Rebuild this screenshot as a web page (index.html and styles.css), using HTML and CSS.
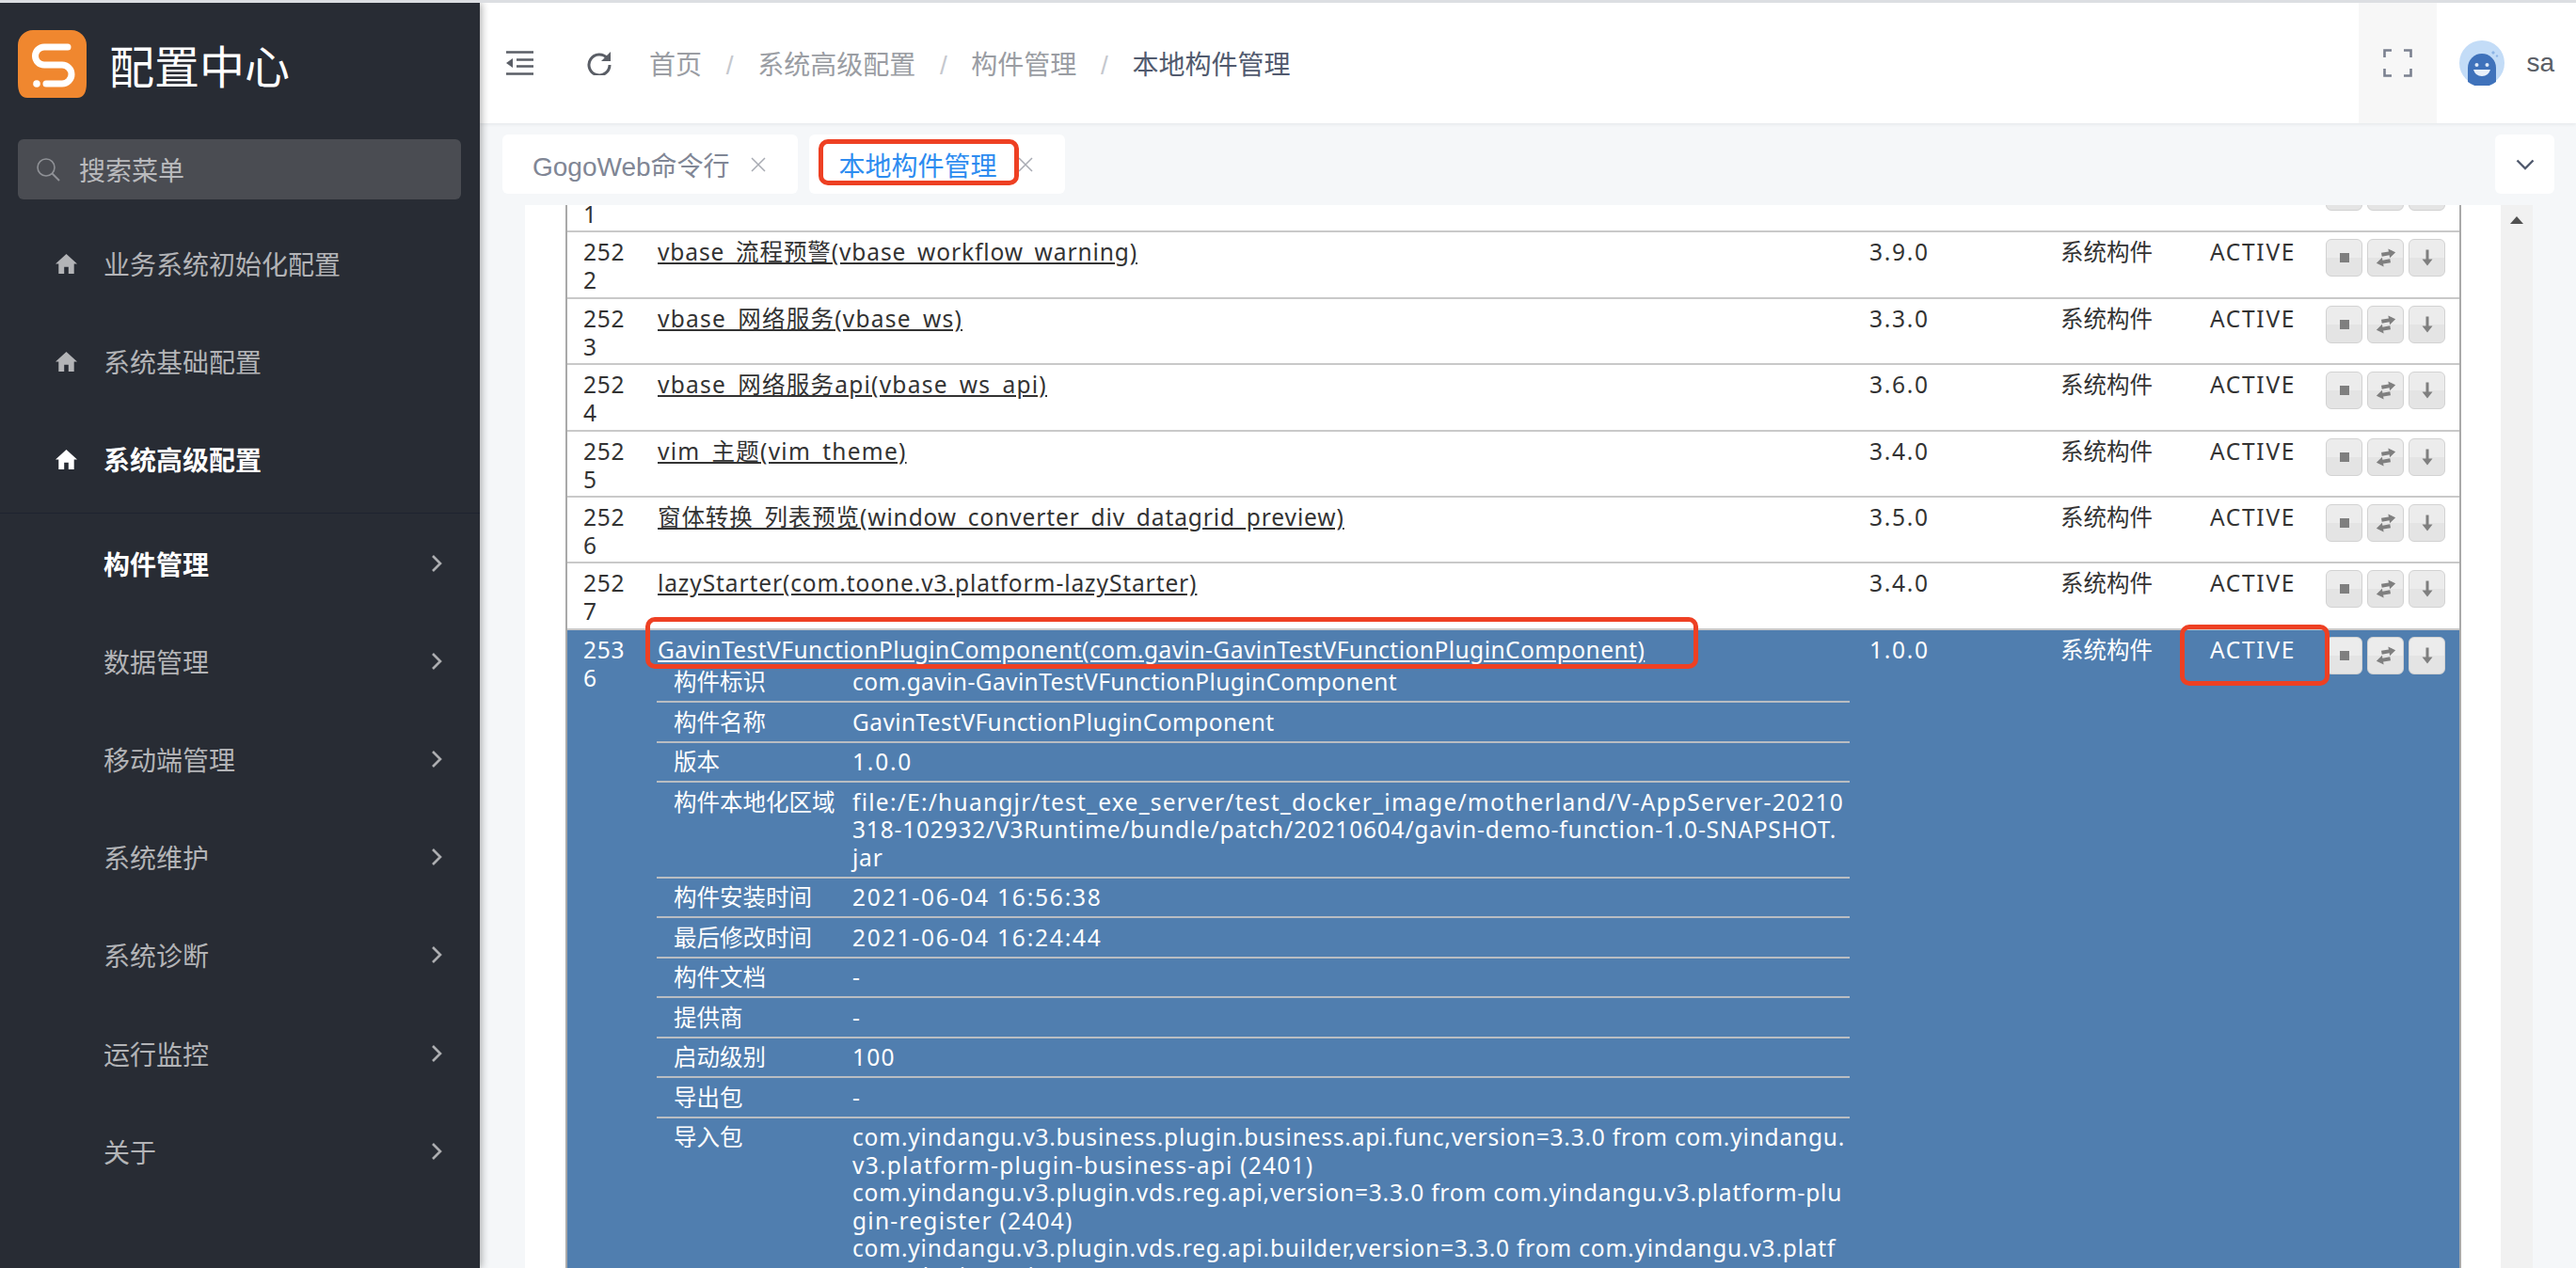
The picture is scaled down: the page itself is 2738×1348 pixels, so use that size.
FILE: index.html
```html
<!DOCTYPE html>
<html lang="zh-CN">
<head>
    <meta charset="UTF-8">
    <title>配置中心</title>
    <link rel="stylesheet" href="styles.css">
</head>
<body>

<svg class="defs" width="0" height="0">
    <symbol id="i-home" viewBox="0 0 24 24"><path d="M12 2 0.5 12.6h3.3V23h5.900v-7.200h4.600V23h5.900V12.600h3.300z"/></symbol>
    <symbol id="i-right" viewBox="0 0 12 20"><path d="M2 2l8 8-8 8" fill="none" stroke="currentColor" stroke-width="2.600"/></symbol>
    <symbol id="i-close" viewBox="0 0 20 20"><path d="M3 3l14 14M17 3 3 17" fill="none" stroke="currentColor" stroke-width="1.500"/></symbol>
    <symbol id="i-stop" viewBox="0 0 20 20"><rect x="5" y="5" width="10" height="10"/></symbol>
    <symbol id="i-swap" viewBox="0 0 24 20"><g transform="rotate(-10 12 10)"><path d="M23 6 16 1v3H8v4h8v3zM1 14l7-5v3h8v4H8v3z"/></g></symbol>
    <symbol id="i-down" viewBox="0 0 20 20"><path d="M8.500 1.500h3v10h4L10 18.500 4.500 11.500h4z"/></symbol>
</svg>

<div class="layout">
    <!-- Left menu -->
    <aside class="sidebar">
        <div class="brand">
            <svg class="logo" viewBox="0 0 73 72">
                <path d="M16 0h41a16 16 0 0 1 16 16v40q0 16-10 16H10Q0 72 0 56V16A16 16 0 0 1 16 0z" fill="#f0872f"/>
                <path d="M53 18H28a9.500 9.500 0 0 0 0 19h19a10 10 0 0 1 0 20H30" fill="none" stroke="#fff" stroke-width="7" stroke-linecap="round"/>
                <circle cx="20" cy="57" r="3.800" fill="#fff"/>
            </svg>
            <span class="brand-name">配置中心</span>
        </div>
        <div class="search">
            <svg class="search-icon" viewBox="0 0 26 26"><circle cx="11" cy="11" r="9" fill="none" stroke="currentColor" stroke-width="1.600"/><path d="M17.500 17.500 25 25" stroke="currentColor" stroke-width="2"/></svg>
            <span>搜索菜单</span>
        </div>
        <nav class="menu-top">
            <a class="menu-item"><svg class="home"><use href="#i-home"/></svg>业务系统初始化配置</a>
            <a class="menu-item"><svg class="home"><use href="#i-home"/></svg>系统基础配置</a>
            <a class="menu-item active"><svg class="home"><use href="#i-home"/></svg>系统高级配置</a>
        </nav>
        <nav class="menu-sub">
            <a class="menu-item sub active">构件管理<svg class="arrow"><use href="#i-right"/></svg></a>
            <a class="menu-item sub">数据管理<svg class="arrow"><use href="#i-right"/></svg></a>
            <a class="menu-item sub">移动端管理<svg class="arrow"><use href="#i-right"/></svg></a>
            <a class="menu-item sub">系统维护<svg class="arrow"><use href="#i-right"/></svg></a>
            <a class="menu-item sub">系统诊断<svg class="arrow"><use href="#i-right"/></svg></a>
            <a class="menu-item sub">运行监控<svg class="arrow"><use href="#i-right"/></svg></a>
            <a class="menu-item sub">关于<svg class="arrow"><use href="#i-right"/></svg></a>
        </nav>
    </aside>

    <div class="main">
        <header class="topbar">
            <svg class="tool-icon fold" viewBox="0 0 29 26"><path d="M0 1.500h29M11 9.500h18M11 16.500h18M0 24.500h29" fill="none" stroke="currentColor" stroke-width="2.400"/><path d="M7 8v10l-7-5z" fill="currentColor"/></svg>
            <svg class="tool-icon reload" viewBox="0 0 26 26"><path d="M21.500 8A11 11 0 1 0 24 15" fill="none" stroke="currentColor" stroke-width="3"/><path d="M25 1v10H15z" fill="currentColor"/></svg>
            <div class="crumbs">
                <span>首页</span><i>/</i><span>系统高级配置</span><i>/</i><span>构件管理</span><i>/</i><span class="current">本地构件管理</span>
            </div>
            <div class="fullscreen">
                <svg viewBox="0 0 31 30"><path d="M1.500 9V1.500H9M22 1.500h7.500V9M29.500 21v7.500H22M9 28.500H1.500V21" fill="none" stroke="#7b8190" stroke-width="2.600"/></svg>
            </div>
            <svg class="avatar" viewBox="0 0 48 48">
                <circle cx="24" cy="24" r="24" fill="#c3dcf7"/>
                <path d="M9 44V29a15 15 0 0 1 30 0v15a24 24 0 0 1-30 0z" fill="#3f72bb"/>
                <circle cx="18.500" cy="26" r="2" fill="#dfeaf8"/><circle cx="29.500" cy="26" r="2" fill="#dfeaf8"/>
                <path d="M15 31h18q-2 7-9 7t-9-7z" fill="#e8f0fa"/>
                <path d="M36 11l2 2-2 2-2-2zM40 15l1.500 1.500-1.500 1.500-1.500-1.500z" fill="#8db5e6"/>
            </svg>
            <span class="user">sa</span>
        </header>

        <div class="tabs">
            <div class="tab">GogoWeb命令行<svg class="tab-close"><use href="#i-close"/></svg></div>
            <div class="tab active">本地构件管理<svg class="tab-close"><use href="#i-close"/></svg></div>
            <div class="tab-more"><svg viewBox="0 0 20 12"><path d="M1.500 1.500 10 10l8.500-8.500" fill="none" stroke="#515a6e" stroke-width="2.400"/></svg></div>
        </div>

        <div class="content">
            <div class="panel">
                <div class="table-wrap">
                    <table class="bundles">
                        <colgroup>
                            <col class="c-no"><col class="c-name"><col class="c-ver"><col class="c-type"><col class="c-state"><col class="c-ops">
                        </colgroup>
                        <tr>
                            <td>2521</td><td></td><td></td><td></td><td></td>
                            <td><div class="ops"><b><svg><use href="#i-stop"/></svg></b><b><svg><use href="#i-swap"/></svg></b><b><svg><use href="#i-down"/></svg></b></div></td>
                        </tr>
                        <tr>
                            <td>2522</td><td><a>vbase_流程预警(vbase_workflow_warning)</a></td><td>3.9.0</td><td>系统构件</td><td>ACTIVE</td>
                            <td><div class="ops"><b><svg><use href="#i-stop"/></svg></b><b><svg><use href="#i-swap"/></svg></b><b><svg><use href="#i-down"/></svg></b></div></td>
                        </tr>
                        <tr>
                            <td>2523</td><td><a class="short">vbase_网络服务(vbase_ws)</a></td><td>3.3.0</td><td>系统构件</td><td>ACTIVE</td>
                            <td><div class="ops"><b><svg><use href="#i-stop"/></svg></b><b><svg><use href="#i-swap"/></svg></b><b><svg><use href="#i-down"/></svg></b></div></td>
                        </tr>
                        <tr>
                            <td>2524</td><td><a class="short">vbase_网络服务api(vbase_ws_api)</a></td><td>3.6.0</td><td>系统构件</td><td>ACTIVE</td>
                            <td><div class="ops"><b><svg><use href="#i-stop"/></svg></b><b><svg><use href="#i-swap"/></svg></b><b><svg><use href="#i-down"/></svg></b></div></td>
                        </tr>
                        <tr>
                            <td>2525</td><td><a class="short">vim_主题(vim_theme)</a></td><td>3.4.0</td><td>系统构件</td><td>ACTIVE</td>
                            <td><div class="ops"><b><svg><use href="#i-stop"/></svg></b><b><svg><use href="#i-swap"/></svg></b><b><svg><use href="#i-down"/></svg></b></div></td>
                        </tr>
                        <tr>
                            <td>2526</td><td><a>窗体转换_列表预览(window_converter_div_datagrid_preview)</a></td><td>3.5.0</td><td>系统构件</td><td>ACTIVE</td>
                            <td><div class="ops"><b><svg><use href="#i-stop"/></svg></b><b><svg><use href="#i-swap"/></svg></b><b><svg><use href="#i-down"/></svg></b></div></td>
                        </tr>
                        <tr>
                            <td>2527</td><td><a>lazyStarter(com.toone.v3.platform-lazyStarter)</a></td><td>3.4.0</td><td>系统构件</td><td>ACTIVE</td>
                            <td><div class="ops"><b><svg><use href="#i-stop"/></svg></b><b><svg><use href="#i-swap"/></svg></b><b><svg><use href="#i-down"/></svg></b></div></td>
                        </tr>
                        <tr class="selected">
                            <td>2536</td>
                            <td>
                                <a class="tight">GavinTestVFunctionPluginComponent(com.gavin-GavinTestVFunctionPluginComponent)</a>
                                <table class="detail">
                                    <tr><th>构件标识</th><td class="sp-id">com.gavin-GavinTestVFunctionPluginComponent</td></tr>
                                    <tr><th>构件名称</th><td class="sp-id">GavinTestVFunctionPluginComponent</td></tr>
                                    <tr><th>版本</th><td class="sp-num">1.0.0</td></tr>
                                    <tr><th>构件本地化区域</th><td><span class="sp-long">file:/E:/huangjr/test_exe_server/test_docker_image/motherland/V-AppServer-20210</span><br>318-102932/V3Runtime/bundle/patch/20210604/gavin-demo-function-1.0-SNAPSHOT.<br>jar</td></tr>
                                    <tr><th>构件安装时间</th><td class="sp-num">2021-06-04 16:56:38</td></tr>
                                    <tr><th>最后修改时间</th><td class="sp-num">2021-06-04 16:24:44</td></tr>
                                    <tr><th>构件文档</th><td>-</td></tr>
                                    <tr><th>提供商</th><td>-</td></tr>
                                    <tr><th>启动级别</th><td class="sp-long">100</td></tr>
                                    <tr><th>导出包</th><td>-</td></tr>
                                    <tr><th>导入包</th><td>com.yindangu.v3.business.plugin.business.api.func,version=3.3.0 from com.yindangu.<br><span class="sp-long">v3.platform-plugin-business-api (2401)</span><br>com.yindangu.v3.plugin.vds.reg.api,version=3.3.0 from com.yindangu.v3.platform-plu<br><span class="sp-long">gin-register (2404)</span><br>com.yindangu.v3.plugin.vds.reg.api.builder,version=3.3.0 from com.yindangu.v3.platf<br>orm-plugin-register (2404)</td></tr>
                                </table>
                            </td>
                            <td>1.0.0</td><td>系统构件</td><td>ACTIVE</td>
                            <td><div class="ops"><b><svg><use href="#i-stop"/></svg></b><b><svg><use href="#i-swap"/></svg></b><b><svg><use href="#i-down"/></svg></b></div></td>
                        </tr>
                    </table>
                </div>
                <div class="scrollbar"><span class="scroll-up"></span></div>
            </div>
        </div>
    </div>
</div>

<!-- Red annotation boxes drawn over the screenshot -->
<div class="mark mark-tab"></div>
<div class="mark mark-link"></div>
<div class="mark mark-state"></div>

</body>
</html>
```

FILE: styles.css
```css
html, body {
    margin: 0;
    padding: 0;
    height: 100%;
    overflow: hidden;
}

body {
    font-family: "Liberation Sans", "Noto Sans CJK SC", sans-serif;
    font-size: 28px;
    background-color: #f5f7f9;
    border-top: 3px solid #dcdee2;
    box-sizing: border-box;
    position: relative;
}

.defs {
    position: absolute;
}

.layout {
    display: flex;
    height: 100%;
}

/* Left menu */
.sidebar {
    width: 510px;
    flex: none;
    background-color: #282c34;
    box-shadow: 2px 0 8px rgba(0, 0, 0, 0.3);
    position: relative;
    z-index: 2;
}

.brand {
    display: flex;
    align-items: center;
    padding: 29px 0 0 19px;
}

.logo {
    width: 73px;
    height: 72px;
}

.brand-name {
    margin-left: 24px;
    font-size: 48px;
    color: #fff;
}

.search {
    display: flex;
    align-items: center;
    height: 64px;
    margin: 44px 20px 16px 19px;
    padding-left: 19px;
    background-color: #4a4c52;
    border-radius: 6px;
    color: #b9babd;
}

.search-icon {
    width: 26px;
    height: 26px;
    margin-right: 20px;
    color: #8f9196;
}

.menu-sub {
    margin-top: 4px;
    padding-top: 1px;
    border-top: 1px solid #1e2330;
}

.menu-item {
    display: flex;
    align-items: center;
    height: 104.200px;
    padding-left: 58px;
    color: #b3b4b7;
}

.menu-item.active {
    color: #fff;
    font-weight: bold;
}

.menu-item.sub {
    padding-left: 110px;
}

.home {
    width: 25px;
    height: 24px;
    margin-right: 27px;
    fill: currentColor;
}

.arrow {
    width: 12px;
    height: 20px;
    margin-left: auto;
    margin-right: 40px;
    color: #adaeb1;
}

/* Right side */
.main {
    flex: 1;
    min-width: 0;
    display: flex;
    flex-direction: column;
}

.topbar {
    display: flex;
    align-items: center;
    height: 128px;
    flex: none;
    padding-left: 28px;
    background-color: #fff;
    box-shadow: 0 1px 4px rgba(0, 21, 41, 0.08);
    color: #5a5e66;
    position: relative;
    z-index: 1;
}

.tool-icon {
    color: #5a5e66;
    flex: none;
}

.fold {
    width: 29px;
    height: 26px;
}

.reload {
    width: 26px;
    height: 26px;
    margin-left: 57px;
}

.crumbs {
    margin-left: 40px;
    color: #9a9da3;
    white-space: nowrap;
}

.crumbs i {
    font-style: normal;
    margin: 0 25.700px;
    color: #c5c8ce;
}

.crumbs .current {
    color: #515a6e;
}

.fullscreen {
    display: flex;
    align-items: center;
    justify-content: center;
    margin-left: auto;
    width: 83px;
    height: 100%;
    background-color: #f7f7f7;
}

.fullscreen svg {
    width: 31px;
    height: 30px;
}

.avatar {
    width: 48px;
    height: 48px;
    margin-left: 24px;
}

.user {
    margin: 0 23px 0 23px;
    color: #5a5e66;
}

.tabs {
    display: flex;
    height: 87px;
    flex: none;
    box-sizing: border-box;
    padding: 12px 23px 0 24px;
    gap: 12px;
}

.tab {
    display: flex;
    align-items: center;
    height: 63px;
    padding: 0 32px;
    background-color: #fff;
    border-radius: 6px;
    color: #808695;
    white-space: nowrap;
}

.tab.active {
    color: #2d8cf0;
}

.tab-close {
    width: 20px;
    height: 20px;
    margin-left: 20px;
    color: #a8abb3;
}

.tab-more {
    display: flex;
    align-items: center;
    justify-content: center;
    margin-left: auto;
    width: 63px;
    height: 63px;
    background-color: #fff;
    border-radius: 6px;
}

.tab-more svg {
    width: 20px;
    height: 12px;
}

.content {
    flex: 1;
    min-height: 0;
    padding: 0 46px 0 48px;
}

.panel {
    display: flex;
    height: 100%;
    background-color: #fff;
    overflow: hidden;
}

.table-wrap {
    flex: 1;
    min-width: 0;
    padding-left: 43px;
}

.scrollbar {
    width: 34px;
    flex: none;
    background-color: #f1f1f1;
}

.scroll-up {
    display: block;
    width: 0;
    margin: 12px auto 0;
    border-left: 7px solid transparent;
    border-right: 7px solid transparent;
    border-bottom: 8px solid #505050;
}

/* Bundle table */
.bundles {
    width: 2013px;
    margin-top: -41px;
    table-layout: fixed;
    border-collapse: separate;
    border-spacing: 0;
    border-left: 2px solid #a9a9a9;
    border-right: 2px solid #a9a9a9;
    font-family: "Noto Sans", "Noto Sans CJK SC", sans-serif;
    font-size: 24.500px;
    line-height: 30px;
    color: #333;
}

.c-no { width: 79px; }
.c-name { width: 1288px; }
.c-ver { width: 203px; }
.c-type { width: 159px; }
.c-state { width: 123px; }
.c-ops { width: 159px; }

.bundles > tbody > tr > td {
    box-sizing: border-box;
    height: 70.400px;
    padding: 6px 4px 2px 17px;
    border-bottom: 2px solid #c9c9c9;
    vertical-align: top;
}

.bundles > tbody > tr > td:nth-child(1) {
    padding-right: 13px;
    word-break: break-all;
    letter-spacing: 0.700px;
}

.bundles > tbody > tr > td:nth-child(3),
.bundles > tbody > tr > td:nth-child(5) {
    letter-spacing: 1.700px;
}

.bundles a {
    text-decoration: underline;
    color: inherit;
    white-space: nowrap;
    letter-spacing: 0.900px;
}

.bundles a.short {
    letter-spacing: 1.250px;
}

.bundles a.tight {
    letter-spacing: 0.480px;
}

.ops {
    display: flex;
    gap: 5px;
    margin-top: 1px;
    letter-spacing: 0;
}

.ops b {
    display: flex;
    align-items: center;
    justify-content: center;
    box-sizing: border-box;
    width: 39px;
    height: 40px;
    background: linear-gradient(#ececec 50%, #e4e4e4 50%);
    border: 1px solid #d2d2d2;
    border-radius: 6px;
}

.ops svg {
    width: 24px;
    height: 20px;
    fill: #7f7f7f;
}

.selected > td {
    background-color: #507eaf;
    color: #fff;
}

.detail {
    width: 1268px;
    margin: -1px 0 0 -1px;
    table-layout: fixed;
    border-collapse: collapse;
}

.detail th {
    width: 208px;
    box-sizing: border-box;
    padding: 5.500px 0 5.500px 18px;
    font-weight: normal;
    line-height: 29.500px;
    text-align: left;
    vertical-align: top;
    white-space: nowrap;
}

.detail td {
    padding: 5.500px 0;
    line-height: 29.500px;
    letter-spacing: 0.800px;
    white-space: nowrap;
    vertical-align: top;
}

.detail td.sp-id {
    letter-spacing: 0.400px;
}

.detail td.sp-num {
    letter-spacing: 1.800px;
}

.detail .sp-long {
    letter-spacing: 1.250px;
}

.detail tr {
    border-bottom: 2px solid #b9bdc2;
}

.detail tr:last-child {
    border-bottom: none;
}

/* Red annotations */
.mark {
    position: absolute;
    box-sizing: border-box;
    border: 5px solid #ee4023;
    border-radius: 10px;
    z-index: 5;
}

.mark-tab {
    left: 870px;
    top: 145px;
    width: 213px;
    height: 49px;
}

.mark-link {
    left: 686px;
    top: 653px;
    width: 1119px;
    height: 55px;
}

.mark-state {
    left: 2317px;
    top: 661px;
    width: 159px;
    height: 65px;
}
```
